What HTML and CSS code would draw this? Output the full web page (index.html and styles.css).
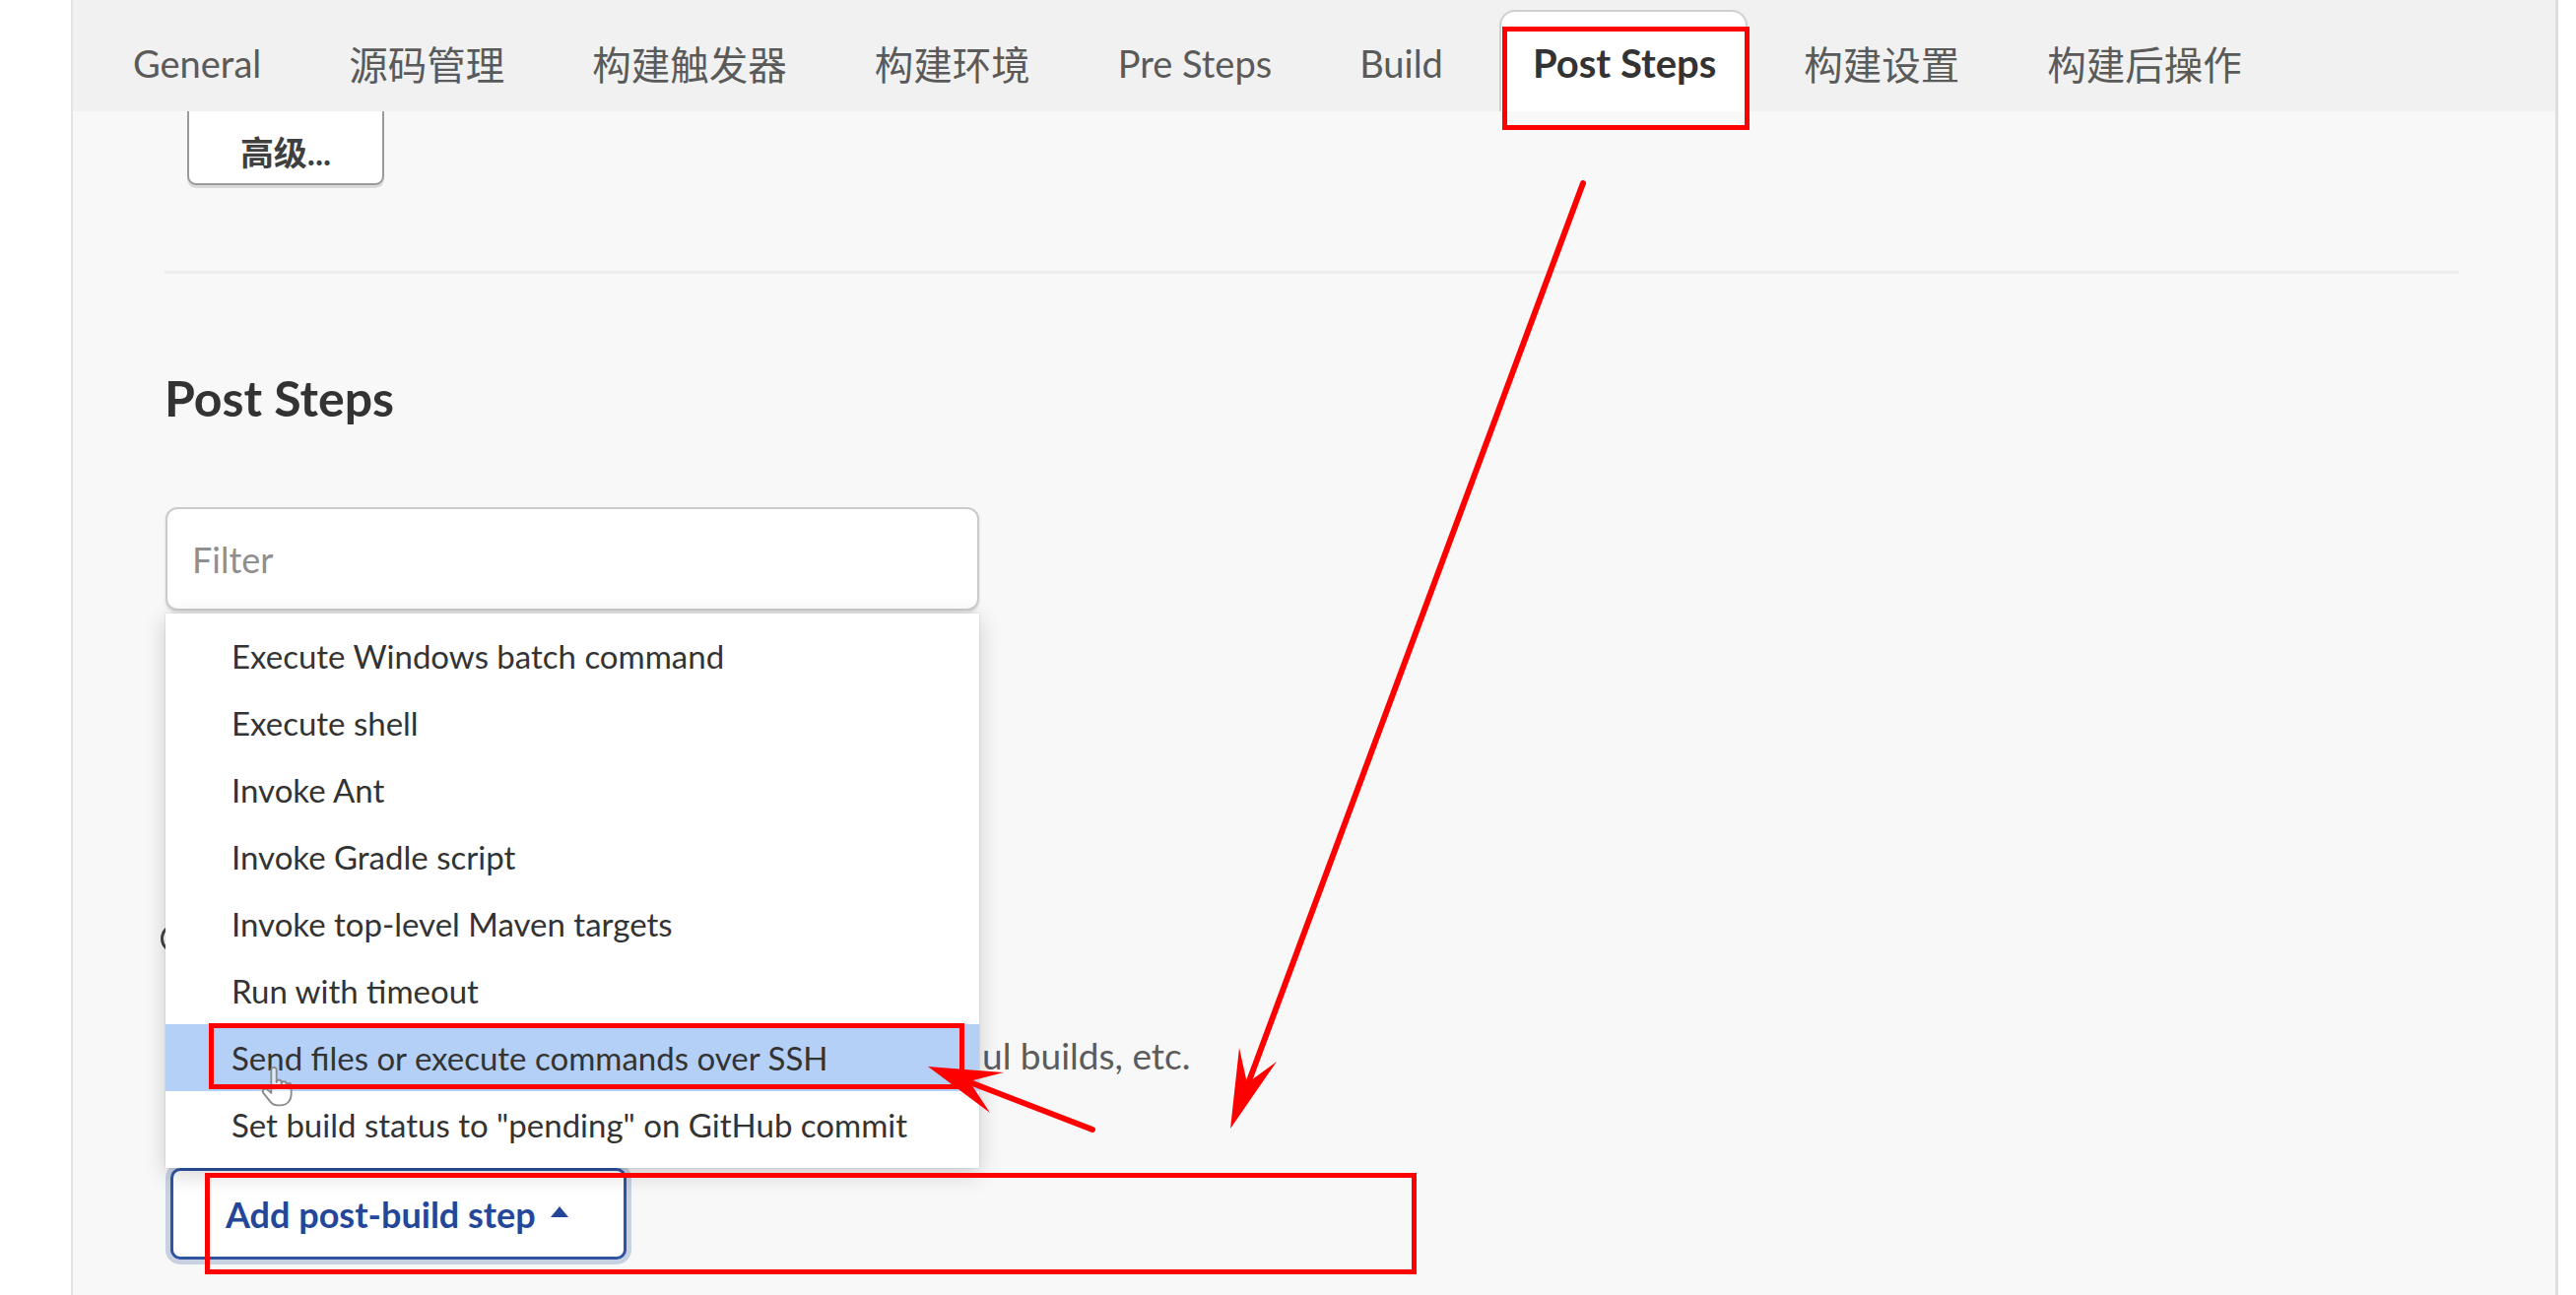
FILE: index.html
```html
<!DOCTYPE html>
<html lang="zh-CN">
<head>
<meta charset="utf-8">
<title>Post Steps</title>
<link rel="stylesheet" href="styles.css">
</head>
<body>
<div class="page">
  <div class="side side-left"></div>
  <main class="main">
    <nav class="tabs">
      <span class="tab">General</span>
      <span class="tab tab-cjk">源码管理</span>
      <span class="tab tab-cjk">构建触发器</span>
      <span class="tab tab-cjk">构建环境</span>
      <span class="tab">Pre Steps</span>
      <span class="tab">Build</span>
      <span class="tab tab-active">Post Steps</span>
      <span class="tab tab-cjk">构建设置</span>
      <span class="tab tab-cjk">构建后操作</span>
    </nav>
    <section class="content">
      <button class="btn-adv">高级...</button>
      <hr class="sep">
      <h2 class="section-title">Post Steps</h2>
      <div class="radio-row"><span class="radio"></span></div>
      <div class="desc-row"><span class="desc-spacer"></span>ul builds, etc.</div>
      <div class="add-wrap">
        <div class="menu">
          <input class="filter" type="text" placeholder="Filter">
          <ul class="menu-list">
            <li class="menu-item">Execute Windows batch command</li>
            <li class="menu-item">Execute shell</li>
            <li class="menu-item">Invoke Ant</li>
            <li class="menu-item">Invoke Gradle script</li>
            <li class="menu-item">Invoke top-level Maven targets</li>
            <li class="menu-item">Run with timeout</li>
            <li class="menu-item menu-item-hover">Send files or execute commands over SSH</li>
            <li class="menu-item">Set build status to "pending" on GitHub commit</li>
          </ul>
          <svg class="cursor" viewBox="0 0 24 26" width="40" height="46">
            <path d="M8 2.5a1.6 1.6 0 0 1 3.2 0V10a1.5 1.5 0 0 1 3 0v1a1.5 1.5 0 0 1 3 0v1a1.5 1.5 0 0 1 3 0v5c0 4-2.5 7-6.5 7h-2c-2 0-3.2-.8-4.3-2.2L3.2 16.5a1.6 1.6 0 0 1 2.4-2.1L8 16.5Z" fill="rgba(255,255,255,0.55)" stroke="#8a8a8a" stroke-width="1.1" stroke-linejoin="round"/>
          </svg>
        </div>
        <button class="btn-add">Add post-build step<svg class="caret" viewBox="0 0 20 12" width="20" height="12"><path d="M1 12 L10 1 L19 12 Z" fill="#24479a"/></svg></button>
      </div>
    </section>
  </main>
  <div class="side side-right"></div>
</div>
<svg class="annot" viewBox="0 0 2615 1315" width="2615" height="1315">
  <g fill="none" stroke="#ff0000" stroke-width="5">
    <rect x="1527.5" y="29.5" width="246" height="100"/>
    <rect x="214.5" y="1041.5" width="762" height="62"/>
    <rect x="210.5" y="1193.5" width="1225" height="98"/>
  </g>
  <g stroke="#ff0000" stroke-width="6" stroke-linecap="round">
    <line x1="1607" y1="186" x2="1266" y2="1103"/>
    <line x1="1109" y1="1147" x2="982" y2="1098"/>
  </g>
  <g fill="#ff0000">
    <polygon points="1249,1146 1258,1064 1266,1100 1296,1078"/>
    <polygon points="942,1083 1019,1089 984,1098 1005,1130"/>
  </g>
</svg>
</body>
</html>
```

FILE: styles.css
```css
html, body {
  margin: 0;
  padding: 0;
  background: #ffffff;
}

body {
  width: 2615px;
  height: 1315px;
  overflow: hidden;
  position: relative;
  font-family: "Lato", "Noto Sans CJK SC", sans-serif;
  color: #333333;
}

.page {
  display: flex;
  height: 1315px;
}

.side-left {
  width: 72px;
  flex: none;
  background: #ffffff;
}

.side-right {
  flex: 1;
  background: #ffffff;
}

.main {
  width: 2525px;
  flex: none;
  box-sizing: border-box;
  border-left: 2px solid #e4e4e4;
  border-right: 3px solid #dedede;
  background: #f8f8f8;
  display: flex;
  flex-direction: column;
}

.tabs {
  height: 113px;
  box-sizing: border-box;
  padding: 10px 0 0 29px;
  background: #f1f1f1;
  display: flex;
  align-items: flex-end;
  gap: 25px;
  position: relative;
  z-index: 1;
}

.tab {
  height: 103px;
  box-sizing: border-box;
  padding: 4px 32px 0;
  display: flex;
  align-items: center;
  font-size: 38px;
  color: #5a5a5a;
  white-space: nowrap;
}

.tab-cjk {
  font-size: 39.5px;
}

.tab-active {
  background: #ffffff;
  border: 2px solid #cfcfcf;
  border-bottom: none;
  border-radius: 16px 16px 0 0;
  font-size: 40px;
  font-weight: 700;
  color: #333333;
  padding: 2px 30px 0 32px;
}

.content {
  flex: 1;
  overflow: hidden;
  padding: 0 98px 0 93px;
  display: flex;
  flex-direction: column;
  align-items: flex-start;
}

.btn-adv {
  margin: -2px 0 0 23px;
  width: 200px;
  height: 77px;
  box-sizing: border-box;
  padding: 8px 0 0;
  background: #ffffff;
  border: 2px solid #9a9a9a;
  border-radius: 0 0 9px 9px;
  box-shadow: 0 3px 0 rgba(0, 0, 0, 0.12);
  font-family: "Lato", "Noto Sans CJK SC", sans-serif;
  font-size: 34px;
  font-weight: 700;
  color: #3f3f3f;
}

.sep {
  align-self: stretch;
  margin: 87px 0 0;
  height: 3px;
  border: none;
  background: #ededed;
}

.section-title {
  margin: 96px 0 0;
  font-size: 50px;
  line-height: 60px;
  font-weight: 700;
  color: #333333;
}

.radio-row {
  margin-top: 499px;
  height: 40px;
  display: flex;
  align-items: center;
  margin-left: -4px;
}

.radio {
  width: 24px;
  height: 24px;
  border: 3px solid #444444;
  border-radius: 50%;
  background: #ffffff;
}

.desc-row {
  margin-top: 74px;
  height: 50px;
  line-height: 50px;
  font-size: 37px;
  color: #5c5c5c;
  white-space: nowrap;
  display: flex;
}

.desc-spacer {
  width: 830px;
  flex: none;
}

.add-wrap {
  position: relative;
  margin: 89px 0 0 6px;
}

.menu {
  position: absolute;
  left: -5px;
  bottom: 100%;
  width: 826px;
  display: flex;
  flex-direction: column;
  gap: 3px;
  z-index: 2;
}

.filter {
  height: 105px;
  box-sizing: border-box;
  margin: 0;
  padding: 0 0 0 25px;
  border: 2px solid #cbcbcb;
  border-radius: 12px;
  background: #ffffff;
  box-shadow: 0 2px 3px rgba(0, 0, 0, 0.12);
  font-family: "Lato", sans-serif;
  font-size: 36px;
  color: #333333;
  outline: none;
}

.filter::placeholder {
  color: #8f8f8f;
}

.menu-list {
  list-style: none;
  margin: 0;
  padding: 9px 0 10px;
  background: #ffffff;
  box-shadow: 0 6px 22px rgba(0, 0, 0, 0.18), 0 0 2px rgba(0, 0, 0, 0.15);
}

.menu-item {
  height: 68px;
  line-height: 68px;
  padding-left: 67px;
  font-size: 33px;
  color: #333333;
  white-space: nowrap;
}

.menu-item-hover {
  background: #b4d0f6;
}

.cursor {
  position: absolute;
  left: 94px;
  top: 566px;
}

.btn-add {
  width: 463px;
  height: 93px;
  box-sizing: border-box;
  padding: 0 0 0 53px;
  display: flex;
  align-items: center;
  gap: 14px;
  background: #ffffff;
  border: 3px solid #2f54a3;
  border-radius: 10px;
  box-shadow: 0 0 0 5px rgba(90, 120, 175, 0.3);
  font-family: "Lato", sans-serif;
  font-size: 36px;
  font-weight: 700;
  color: #24479a;
}

.caret {
  margin-top: -6px;
}

.annot {
  position: absolute;
  left: 0;
  top: 0;
  pointer-events: none;
  z-index: 5;
}
```
